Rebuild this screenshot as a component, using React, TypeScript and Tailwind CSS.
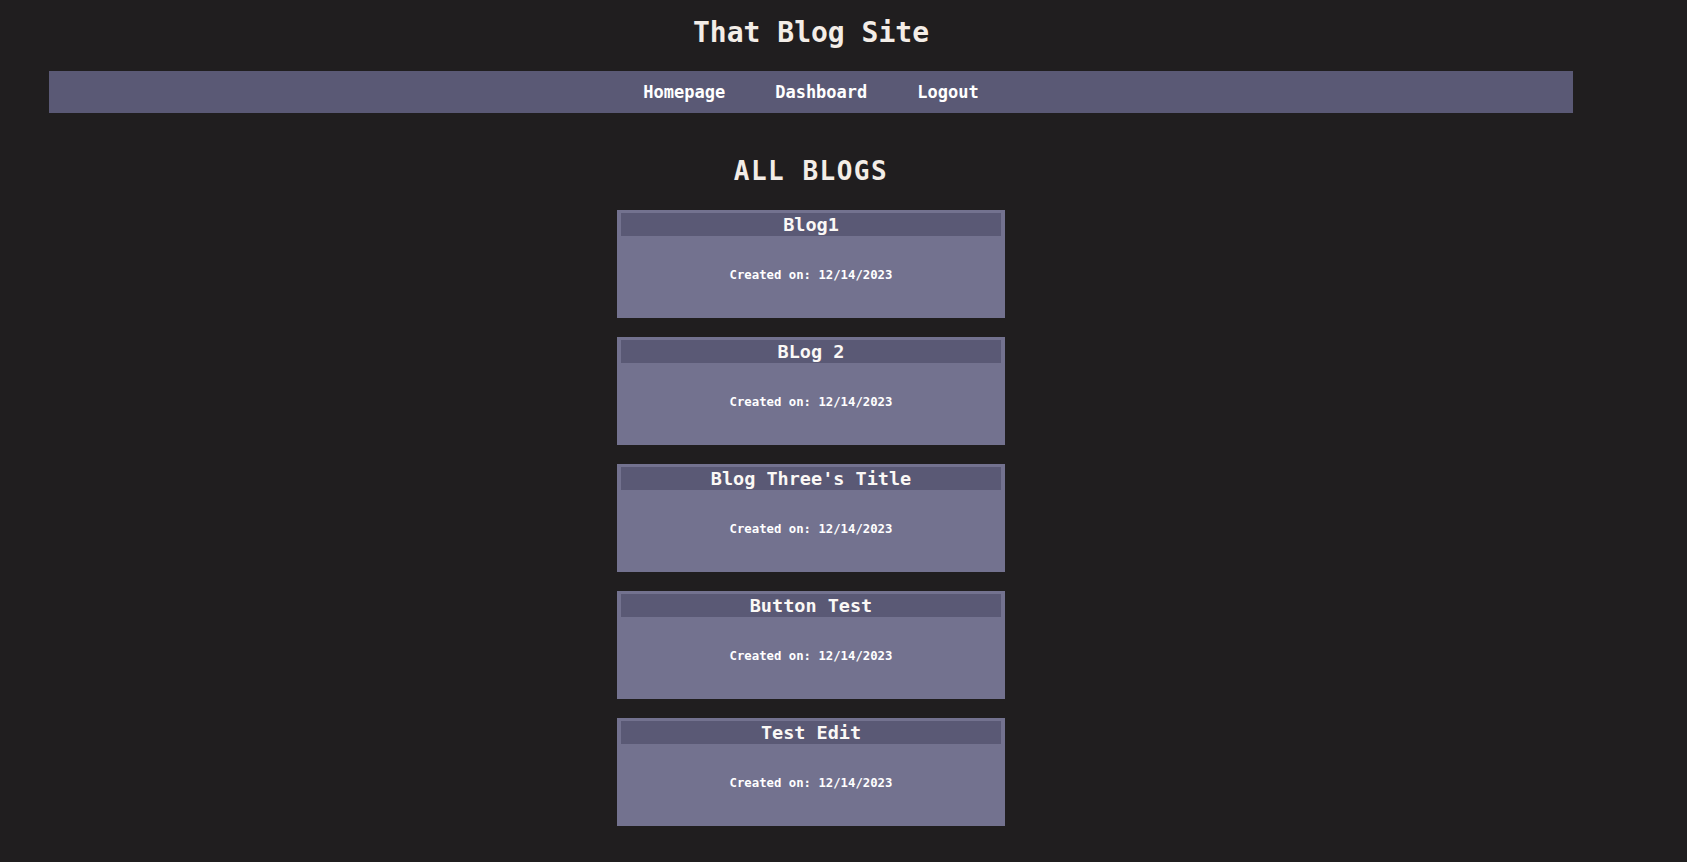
type Blog = {
  id: number;
  title: string;
  created: string;
};

const blogs: Blog[] = [
  { id: 1, title: 'Blog1', created: '12/14/2023' },
  { id: 2, title: 'BLog 2', created: '12/14/2023' },
  { id: 3, title: "Blog Three's Title", created: '12/14/2023' },
  { id: 4, title: 'Button Test', created: '12/14/2023' },
  { id: 5, title: 'Test Edit', created: '12/14/2023' },
];

const BlogCard = ({ blog }: { blog: Blog }) => {
  return (
    <div className="w-[388px] h-[108px] bg-[#73728f] px-[4px] py-[3px] flex flex-col">
      <h2 className="h-[23px] bg-[#5a5975] text-center text-[18.5px] leading-[23px] font-bold text-[#fbf8f5]">
        {blog.title}
      </h2>
      <div className="flex-1 flex items-center justify-center">
        <p className="text-[12.3px] font-bold text-white">Created on: {blog.created}</p>
      </div>
    </div>
  );
};

const App = () => {
  const links = ['Homepage', 'Dashboard', 'Logout'];
  return (
    <div className="min-h-screen bg-[#201e1f] font-['DejaVu_Sans_Mono','Liberation_Mono',monospace]">
      <div className="ml-[49px] w-[1524px] pt-[16px]">
        <h1 className="text-center text-[28px] leading-[33px] font-bold text-[#f3ede7]">That Blog Site</h1>

        <nav className="mt-[22px] h-[42px] bg-[#5a5975] flex items-center justify-center gap-[50px] pt-[1px]">
          {links.map((link) => (
            <a key={link} href="#" className="text-[17px] font-bold text-white">
              {link}
            </a>
          ))}
        </nav>

        <main className="mt-[43px] flex flex-col items-center pb-[30px]">
          <h2 className="text-[26px] leading-[30px] tracking-[1.5px] font-bold text-[#f3ede7]">ALL BLOGS</h2>
          <div className="mt-[24px] flex flex-col gap-[19px]">
            {blogs.map((blog) => (
              <BlogCard key={blog.id} blog={blog} />
            ))}
          </div>
        </main>
      </div>
    </div>
  );
};

export default App;
